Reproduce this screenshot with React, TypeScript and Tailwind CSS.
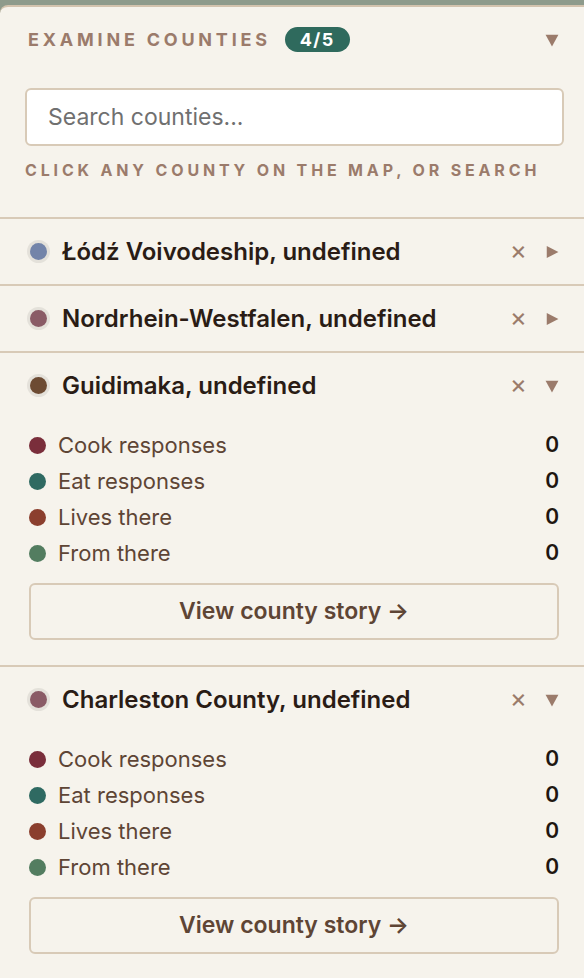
import type { ReactNode } from 'react';

type County = {
  name: string;
  color: string;
  open: boolean;
};

const counties: County[] = [
  { name: 'Łódź Voivodeship, undefined', color: 'bg-[#7384a9]', open: false },
  { name: 'Nordrhein-Westfalen, undefined', color: 'bg-[#8a5b66]', open: false },
  { name: 'Guidimaka, undefined', color: 'bg-[#6d4b33]', open: true },
  { name: 'Charleston County, undefined', color: 'bg-[#8a5b66]', open: true },
];

const metrics = [
  { label: 'Cook responses', color: 'bg-[#7a2e3b]' },
  { label: 'Eat responses', color: 'bg-[#2f6a62]' },
  { label: 'Lives there', color: 'bg-[#8b3f2e]' },
  { label: 'From there', color: 'bg-[#537d60]' },
];

function Caret({ open }: { open: boolean }) {
  return open ? (
    <svg width="14" height="14" viewBox="0 0 12 12" aria-hidden>
      <path d="M0.5 1.5h11L6 11.5z" fill="#9b7b6b" />
    </svg>
  ) : (
    <svg width="14" height="14" viewBox="0 0 12 12" aria-hidden>
      <path d="M1.5 0.8v10.4L11.5 6z" fill="#9b7b6b" />
    </svg>
  );
}

function Row({ county, children }: { county: County; children?: ReactNode }) {
  return (
    <div className="border-t-2 border-[#d8cab7]">
      <div className="flex h-[65px] items-center pl-[27px] pr-[25px]">
        <span className="flex h-[23px] w-[23px] shrink-0 items-center justify-center rounded-full bg-[#e4e1da]">
          <span className={`h-[17px] w-[17px] rounded-full ${county.color}`} />
        </span>
        <span className="ml-[12px] flex-1 text-[24px] font-semibold text-[#2a1c15]">{county.name}</span>
        <span className="mr-[18px] -mt-[3px] text-[26px] leading-none text-[#9b7b6b]">×</span>
        <Caret open={county.open} />
      </div>
      {children}
    </div>
  );
}

function Details() {
  return (
    <div className="pb-[25px] pl-[29px] pr-[25px] pt-[9px]">
      <div className="flex flex-col">
        {metrics.map((m) => (
          <div key={m.label} className="flex h-[36px] items-center">
            <span className={`h-[17px] w-[17px] rounded-full ${m.color}`} />
            <span className="ml-[12px] flex-1 text-[22px] text-[#5e4535]">{m.label}</span>
            <span className="text-[21px] font-semibold text-[#1f1611]">0</span>
          </div>
        ))}
      </div>
      <button
        type="button"
        className="mt-[12px] flex h-[57px] w-full items-center justify-center rounded-md border-2 border-[#d8cab7] text-[23px] font-semibold text-[#5e4535]"
      >
        View county story →
      </button>
    </div>
  );
}

export default function App() {
  return (
    <div className="h-[978px] w-[584px] overflow-hidden bg-[#8e9b8c] pt-[5px] font-['Inter',sans-serif]">
      <div className="h-full rounded-tl-lg border-t-2 border-[#d3c3ae] bg-[#f6f3ec]">
        <div className="flex items-center pl-[28px] pr-[25px] pt-[19px]">
          <span className="text-[18px] font-bold uppercase tracking-[0.21em] text-[#9b7b6b]">Examine counties</span>
          <span className="ml-[14px] flex h-[25px] items-center rounded-full bg-[#2f6a5d] px-[15px] text-[18px] font-bold tracking-[0.08em] text-white">
            4/5
          </span>
          <span className="flex-1" />
          <Caret open />
        </div>
        <div className="px-[25px] pt-[35px]">
          <input
            type="text"
            placeholder="Search counties..."
            className="h-[58px] w-[539px] rounded-md border-2 border-[#d8cab7] bg-white px-[21px] text-[23px] text-[#333] placeholder:text-[#707070] outline-none"
          />
          <p className="mt-[12px] text-[16px] font-bold uppercase tracking-[0.24em] text-[#9b7b6b]">
            Click any county on the map, or search
          </p>
        </div>
        <div className="mt-[35px]">
          {counties.map((c) => (
            <Row key={c.name} county={c}>
              {c.open ? <Details /> : null}
            </Row>
          ))}
        </div>
      </div>
    </div>
  );
}
